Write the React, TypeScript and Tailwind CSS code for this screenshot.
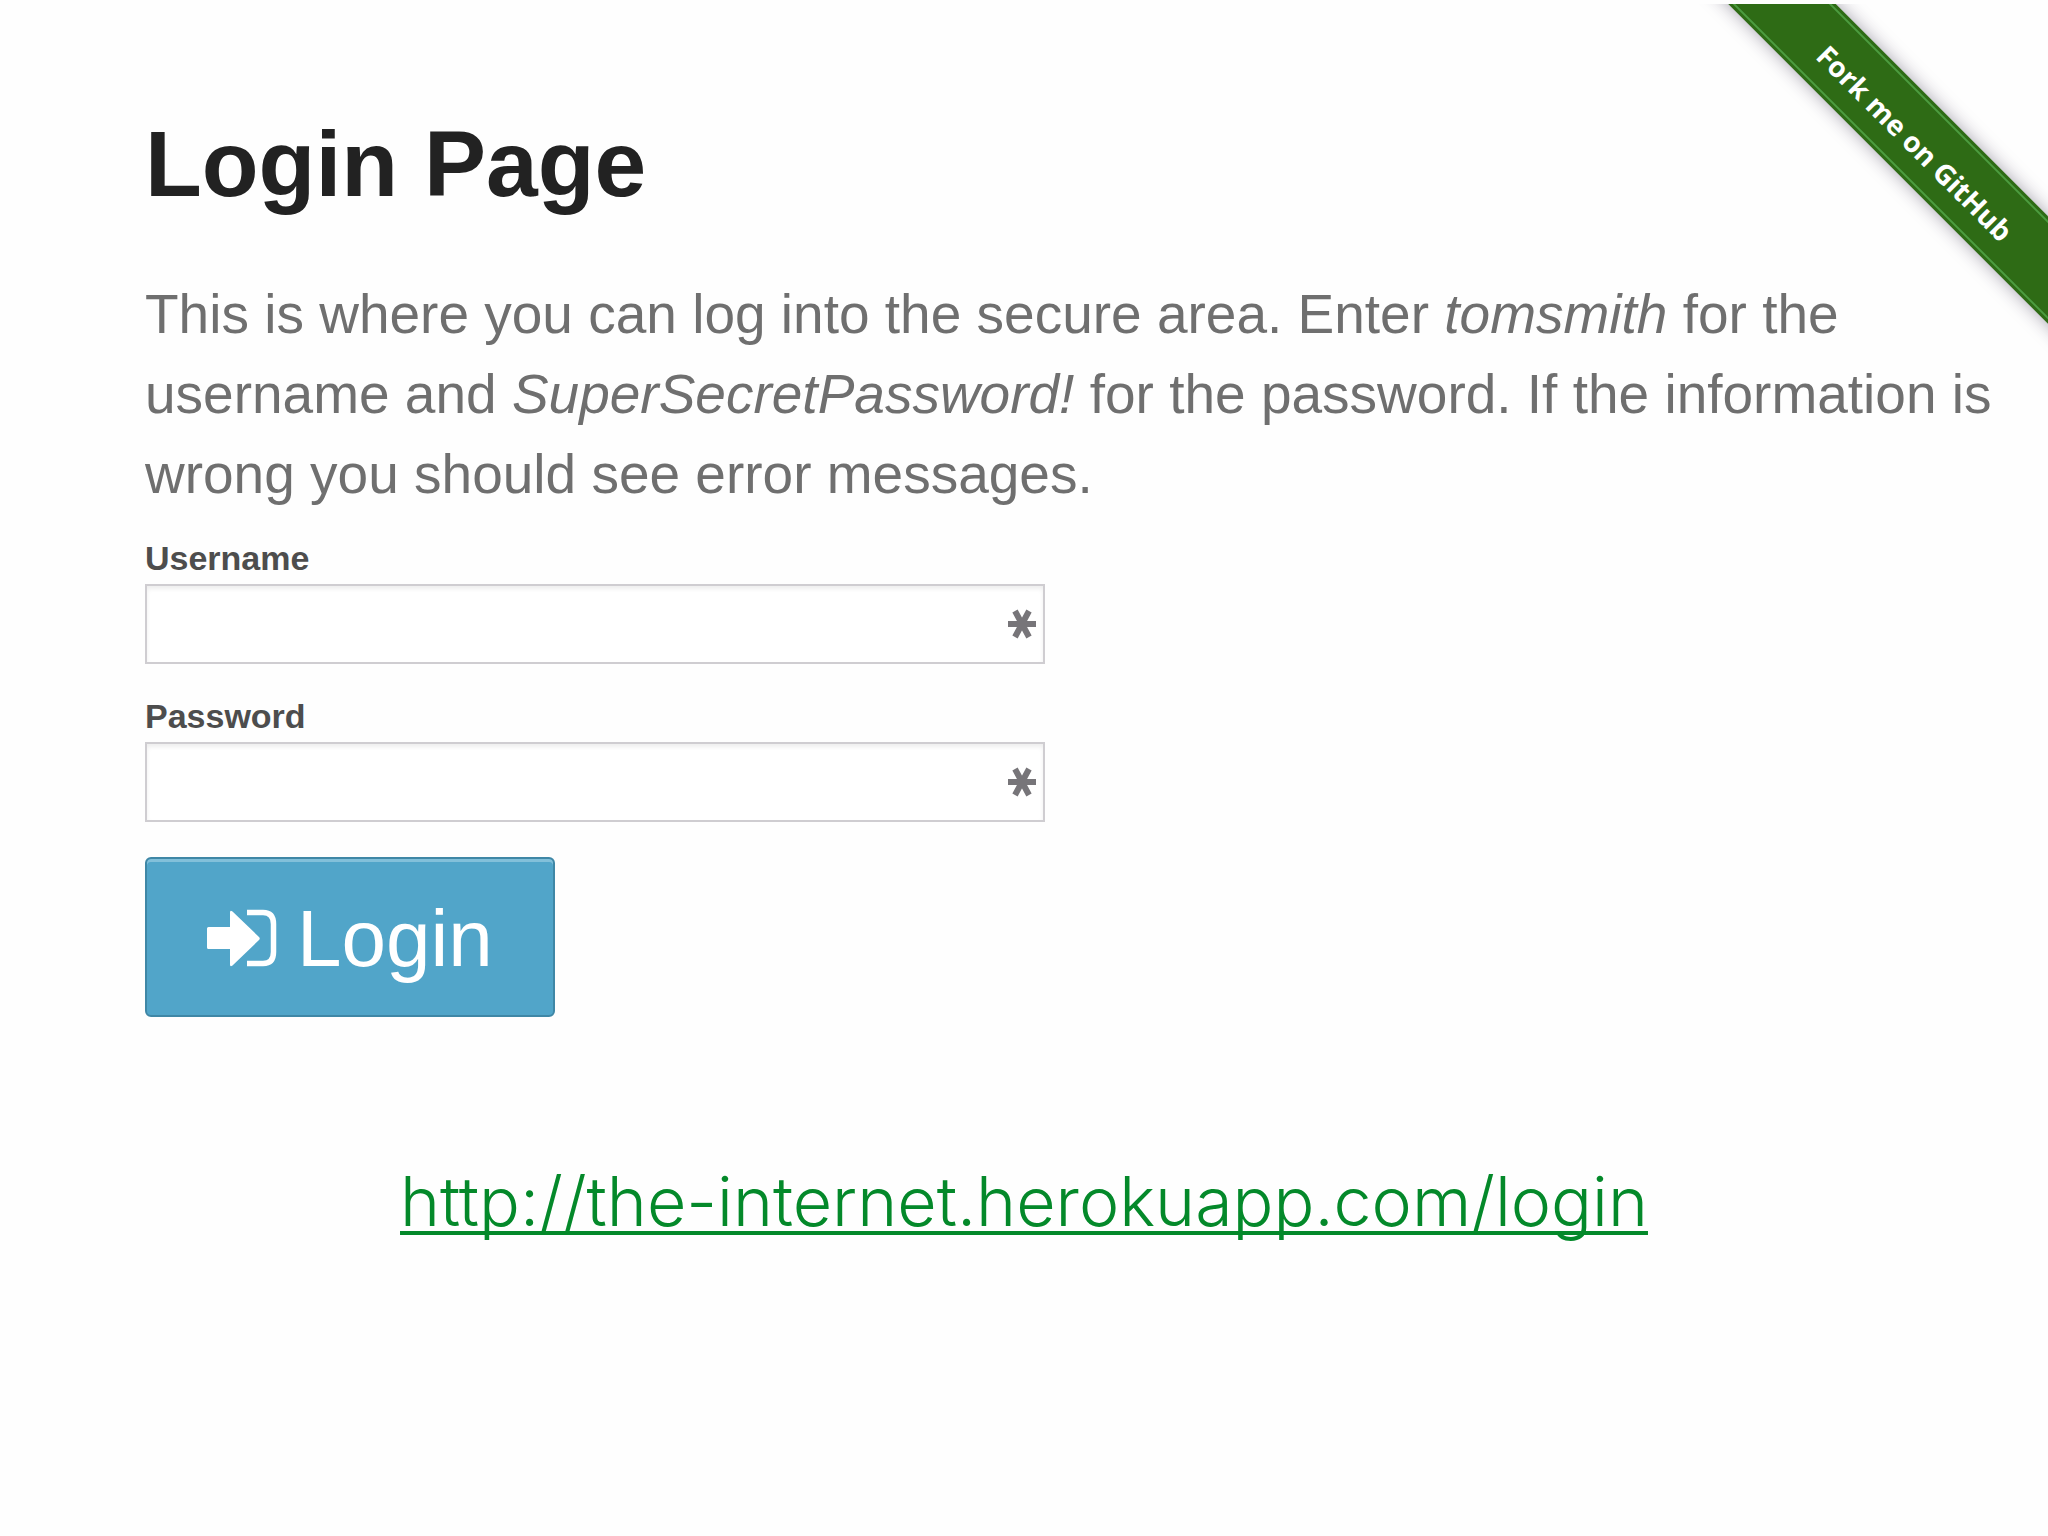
function SignInIcon() {
  return (
    <svg viewBox="0 0 70 60" className="h-[60px] w-[70px] shrink-0" aria-hidden="true">
      <path
        d="M1.500 18H23V3.500Q23 .500 25.500 2.500L52 28Q53.500 29.500 52 31L25.500 56.500Q23 58.500 23 55.500V40H1.500Q0 40 0 38.500V19.500Q0 18 1.500 18Z"
        fill="white"
      />
      <path d="M40 3.500H56Q66.500 3.500 66.500 15V43Q66.500 54.500 56 54.500H40" fill="none" stroke="white" strokeWidth="5.500" />
    </svg>
  );
}

function Asterisk() {
  return (
    <svg
      viewBox="0 0 30 30"
      className="pointer-events-none absolute top-1/2 right-2 size-[30px] -translate-y-1/2"
      aria-hidden="true"
    >
      <path d="M1 15H29M8 2L22 28M22 2L8 28" stroke="#777579" strokeWidth="6" />
    </svg>
  );
}

function Field({ id, label, type }: { id: string; label: string; type: string }) {
  return (
    <div className="w-full max-w-[900px]">
      <label htmlFor={id} className="mb-1 block text-[34px] leading-[44px] font-bold text-[#4d4d4d]">
        {label}
      </label>
      <div className="relative">
        <input
          id={id}
          name={id}
          type={type}
          className="block h-20 w-full border-2 border-[#cfcdd1] bg-white pr-12 pl-4 text-[34px] text-[#4d4d4d] shadow-[inset_0_3px_4px_rgba(0,0,0,0.07)] outline-none"
        />
        <Asterisk />
      </div>
    </div>
  );
}

function Ribbon() {
  return (
    <div className="absolute top-1 right-0 h-[400px] w-[400px] overflow-hidden">
      <a
        href="https://github.com/tourdedave/the-internet"
        className="absolute top-[98px] left-[-30px] block h-[76px] w-[600px] rotate-45 bg-[#2e6b15] py-[3px] text-center font-['Open_Sans',sans-serif] text-[28px] leading-[58px] font-bold text-white shadow-[0_0_18px_rgba(40,30,60,0.4)]"
      >
        <span className="block border-y-2 border-[#4c9c40] pt-2">Fork me on GitHub</span>
      </a>
    </div>
  );
}

export default function App() {
  return (
    <div className="relative min-h-screen overflow-hidden bg-[#fefefe] font-['Liberation_Sans',Arial,sans-serif]">
      <Ribbon />
      <main className="pt-[108px] pr-8 pl-[145px]">
        <h1 className="text-[93px] leading-[112px] font-bold text-[#222222]">Login Page</h1>
        <p className="mt-[54px] text-[55px] leading-[80px] text-[#6f6f6f]">
          This is where you can log into the secure area. Enter <em>tomsmith</em> for the username and{" "}
          <em>SuperSecretPassword!</em> for the password. If the information is wrong you should see error messages.
        </p>
        <form className="mt-[22px] flex flex-col items-start gap-[30px]" onSubmit={(e) => e.preventDefault()}>
          <Field id="username" label="Username" type="text" />
          <Field id="password" label="Password" type="password" />
          <button
            type="submit"
            className="mt-[5px] flex h-[160px] items-center gap-5 rounded-md border-2 border-[#3f87a6] bg-[#51a5c9] px-[60px] pt-1 text-[80px] text-white shadow-[inset_0_3px_0_#82c0da]"
          >
            <SignInIcon />
            Login
          </button>
        </form>
      </main>
      <footer className="mt-[134px] text-center">
        <a
          href="http://the-internet.herokuapp.com/login"
          className="font-['Inter','Liberation_Sans',sans-serif] text-[68px] leading-[100px] font-light text-[#04892a] underline decoration-4 underline-offset-[5px] [text-decoration-skip-ink:none]"
        >
          http://the-internet.herokuapp.com/login
        </a>
      </footer>
    </div>
  );
}
